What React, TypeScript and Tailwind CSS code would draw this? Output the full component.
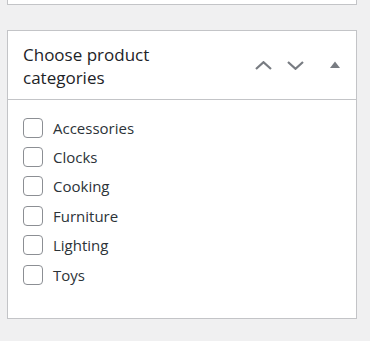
import React from "react";

const items = ["Accessories", "Clocks", "Cooking", "Furniture", "Lighting", "Toys"];

export default function App() {
  return (
    <div
      className="min-h-screen w-full bg-[#f0f0f1] pl-[7px]"
      style={{ fontFamily: '"Open Sans", "Noto Sans", sans-serif' }}
    >
      <div className="h-[5px] w-[350px] border-x border-b border-[#c3c4c7] bg-white" />
      <div className="mt-[25px] w-[350px] border border-[#c3c4c7] bg-white">
        <div className="flex h-[69px] items-center border-b border-[#c3c4c7] pl-[15px] pr-[16px]">
          <h2 className="mt-[2px] w-[200px] text-[17px] leading-[23px] font-normal text-[#1d2327]">
            Choose product categories
          </h2>
          <div className="ml-auto flex items-center">
            <svg width="17" height="9" viewBox="0 0 17 9" className="mt-[1px]">
              <polyline points="1,8 8.5,1.2 16,8" fill="none" stroke="#787c82" strokeWidth="2.2" />
            </svg>
            <svg width="17" height="9" viewBox="0 0 17 9" className="ml-[15px] mt-[1px]">
              <polyline points="1,1 8.5,7.8 16,1" fill="none" stroke="#787c82" strokeWidth="2.2" />
            </svg>
            <svg width="10" height="7" viewBox="0 0 10 7" className="ml-[26px] -mt-[1px]">
              <polygon points="0,7 5,0.5 10,7" fill="#787c82" />
            </svg>
          </div>
        </div>
        <div className="flex h-[218px] flex-col pl-[15px] pt-[13px]">
          {items.map((it) => (
            <label key={it} className="flex h-[29.4px] items-center">
              <span className="box-border h-[20px] w-[20px] rounded-[4px] border border-[#8c8f94] bg-white" />
              <span className="ml-[10px] text-[15px] leading-[20px] text-[#2c3338]">{it}</span>
            </label>
          ))}
        </div>
      </div>
    </div>
  );
}
